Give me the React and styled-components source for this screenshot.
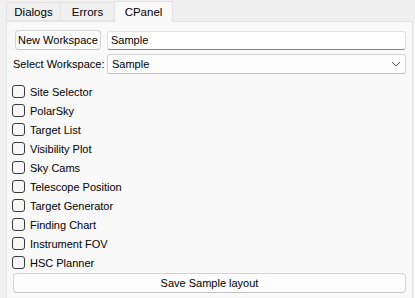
import React from "react";
import styled, { createGlobalStyle } from "styled-components";

const GlobalStyle = createGlobalStyle`
  html, body {
    margin: 0;
    padding: 0;
    background: #f0f0f0;
  }
  body {
    font-family: "Liberation Sans", Arial, sans-serif;
    font-size: 11px;
    color: #000;
  }
`;

const Root = styled.div`
  padding: 0 2px 0 6px;
  height: 298px;
  overflow: hidden;
`;

const TabBar = styled.div`
  display: flex;
  align-items: flex-end;
  height: 21px;
`;

const Tab = styled.div`
  position: relative;
  display: flex;
  align-items: center;
  justify-content: center;
  width: ${(p) => p.$width}px;
  height: ${(p) => (p.$active ? 21 : 19)}px;
  margin-bottom: ${(p) => (p.$active ? -1 : 0)}px;
  margin-left: -1px;
  box-sizing: border-box;
  border: 1px solid #e3e3e3;
  border-bottom: ${(p) => (p.$active ? "none" : "1px solid #e3e3e3")};
  background: ${(p) => (p.$active ? "#f9f9f9" : "#f0f0f0")};
  z-index: ${(p) => (p.$active ? 2 : 1)};
  font-size: 11.5px;
  &:first-child {
    margin-left: 0;
  }
`;

const Panel = styled.div`
  border: 1px solid #e3e3e3;
  background: #f9f9f9;
  padding: 8px 6px 12px 6px;
`;

const FormGrid = styled.div`
  display: grid;
  grid-template-columns: 90px 1fr;
  column-gap: 4px;
  row-gap: 4px;
  align-items: center;
`;

const Button = styled.button`
  font: inherit;
  color: #000;
  height: 20px;
  padding: 0 2px;
  box-sizing: border-box;
  border: 1px solid #d3d3d3;
  border-bottom-color: #c4c4c4;
  border-radius: 4px;
  background: #fdfdfd;
  white-space: nowrap;
  margin: ${(p) => (p.$inset ? "0 -2px 0 2px" : "1px 0 0 0")};
  width: ${(p) => (p.$inset ? "86px" : "100%")};
  display: block;
`;

const TextField = styled.input`
  font: inherit;
  color: #000;
  height: 19px;
  box-sizing: border-box;
  border: 1px solid #e2e2e2;
  border-bottom: 1px solid #8a8a8a;
  border-radius: 3px;
  background: #fff;
  padding: 0 3px;
  outline: none;
`;

const Label = styled.span`
  white-space: nowrap;
`;

const SelectBox = styled.div`
  display: flex;
  align-items: center;
  justify-content: space-between;
  height: 20px;
  box-sizing: border-box;
  border: 1px solid #d3d3d3;
  border-bottom-color: #c2c2c2;
  border-radius: 3px;
  background: #fdfdfd;
  padding: 0 4px 0 4px;
`;

const CheckList = styled.div`
  display: flex;
  flex-direction: column;
  margin: 8px 0 0 -1px;
`;

const CheckRow = styled.label`
  display: flex;
  align-items: center;
  gap: 5px;
  height: 19px;
`;

const Box = styled.span`
  width: 13px;
  height: 13px;
  box-sizing: border-box;
  border: 1px solid #3a3a3a;
  border-radius: 3px;
  background: #f7f7f7;
`;

const Chevron = () => (
  <svg width="10" height="6" viewBox="0 0 10 6">
    <polyline
      points="1,1 5,5 9,1"
      fill="none"
      stroke="#555"
      strokeWidth="1"
    />
  </svg>
);

const items = [
  "Site Selector",
  "PolarSky",
  "Target List",
  "Visibility Plot",
  "Sky Cams",
  "Telescope Position",
  "Target Generator",
  "Finding Chart",
  "Instrument FOV",
  "HSC Planner",
];

export default function App() {
  return (
    <Root>
      <GlobalStyle />
      <TabBar>
        <Tab $width={55}>Dialogs</Tab>
        <Tab $width={55}>Errors</Tab>
        <Tab $width={59} $active>
          CPanel
        </Tab>
      </TabBar>
      <Panel>
        <FormGrid>
          <Button $inset>New Workspace</Button>
          <TextField defaultValue="Sample" />
          <Label>Select Workspace:</Label>
          <SelectBox>
            <span>Sample</span>
            <Chevron />
          </SelectBox>
        </FormGrid>
        <CheckList>
          {items.map((item) => (
            <CheckRow key={item}>
              <Box />
              {item}
            </CheckRow>
          ))}
        </CheckList>
        <Button>Save Sample layout</Button>
      </Panel>
    </Root>
  );
}
